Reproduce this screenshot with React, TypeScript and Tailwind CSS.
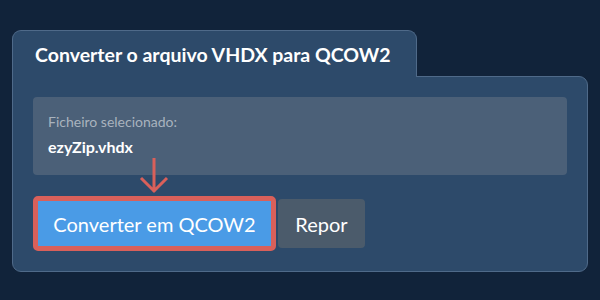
import React from 'react';

export default function App() {
  return (
    <div className="w-[600px] h-[300px] bg-[#11233a] pt-[30px] pl-[12px] font-['Lato',sans-serif]">
      <div className="w-[576px] flex flex-col">
        <div className="relative z-10 -mb-px w-[405px] h-[47px] rounded-t-[9px] border-l border-t border-r border-[#4f6a89] bg-[#2d4a6a] pl-[22px] pt-[12px]">
          <h1 className="text-[19.5px] font-bold text-white leading-[24px]">Converter o arquivo VHDX para QCOW2</h1>
        </div>
        <div className="relative border border-[#4f6a89] bg-[#2d4a6a] rounded-b-[9px] rounded-tr-[9px] p-5">
          <div className="h-[78px] rounded-[4px] bg-[#4b6078] px-[15px] pt-[16px]">
            <p className="text-[14px] text-[#a9b3be] leading-[18px]">Ficheiro selecionado:</p>
            <p className="mt-[6px] text-[16px] font-bold text-white leading-[20px]">ezyZip.vhdx</p>
          </div>
          <div className="relative mt-[21px] flex items-center gap-[2px]">
            <svg className="absolute left-[106px] -top-[38px]" width="30" height="36" viewBox="0 0 30 36">
              <path d="M15 0 V34 M2 20 L15 33 L28 20" stroke="#d9605a" strokeWidth="3" fill="none" />
            </svg>
            <button className="h-[55px] w-[243px] rounded-[5px] border-[5px] border-[#d9605a] bg-[#4a9be6] text-[20px] text-white">
              Converter em QCOW2
            </button>
            <button className="h-[49px] w-[87px] rounded-[4px] bg-[#4b5b6b] text-[20px] text-white">Repor</button>
          </div>
        </div>
      </div>
    </div>
  );
}
